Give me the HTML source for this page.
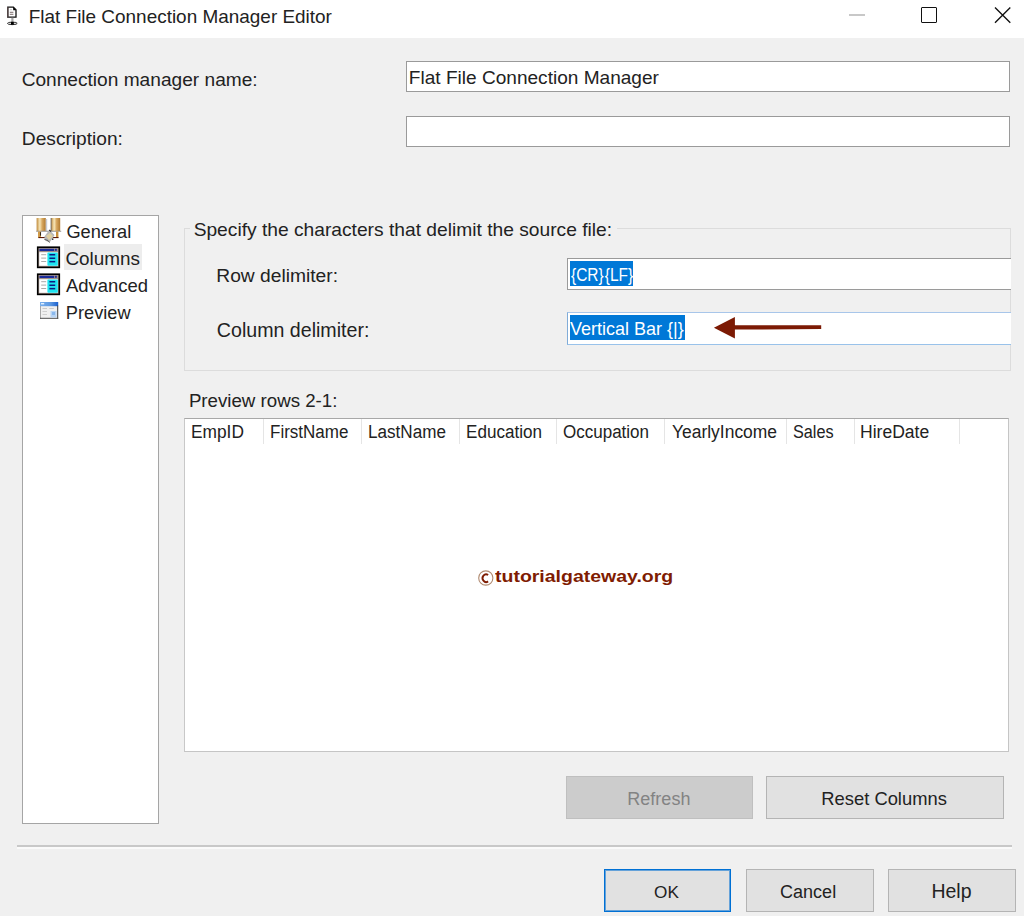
<!DOCTYPE html>
<html><head><meta charset="utf-8">
<style>
html,body{margin:0;padding:0;}
body{width:1024px;height:916px;position:relative;overflow:hidden;background:#f0f0f0;font-family:"Liberation Sans",sans-serif;color:#000;}
.a{position:absolute;}
.t{position:absolute;line-height:1;white-space:nowrap;color:#222;}
.tb{position:absolute;background:#fff;border:1px solid #9a9a9a;box-sizing:border-box;}
.btn{position:absolute;box-sizing:border-box;background:#e1e1e1;border:1px solid #b4b4b4;}
.hd{position:absolute;top:419px;width:1px;height:25px;background:#e5e5e5;}
</style></head>
<body>
<div class="a" style="left:0;top:0;width:1024px;height:38px;background:#fff;"></div>
<svg class="a" style="left:0;top:0" width="30" height="30" viewBox="0 0 30 30">
  <path d="M7.8 7.2 H13.4 L16 9.8 V17.1 H7.8 Z" fill="#fff" stroke="#111" stroke-width="1.3"/>
  <path d="M13.2 7.2 L16.2 10.2 H13.2Z" fill="#000"/>
  <rect x="7.2" y="7" width="1.2" height="10.6" fill="#5a4a4a"/>
  <rect x="9.8" y="9.3" width="2.2" height="0.9" fill="#bbb"/>
  <rect x="9.8" y="11.8" width="3.6" height="0.9" fill="#6b5b5b"/>
  <rect x="9.8" y="13.8" width="3.6" height="0.9" fill="#6b5b5b"/>
  <rect x="11.3" y="17.8" width="2.2" height="4.2" fill="#a8a8a8"/>
  <ellipse cx="12.3" cy="23.4" rx="4.9" ry="1.25" fill="#e0e0e0" stroke="#3a3a3a" stroke-width="1"/>
  <rect x="11" y="21.9" width="2.8" height="2.9" fill="#000"/>
</svg>
<div class="t" style="left:28.78px;top:7.61px;font-size:18.96px;">Flat File Connection Manager Editor</div>
<div class="a" style="left:849px;top:14px;width:16px;height:1.5px;background:#c8c8c8;"></div>
<div class="a" style="left:921px;top:7.2px;width:15.8px;height:15.8px;box-sizing:border-box;border:1.4px solid #111;border-radius:1px;"></div>
<svg class="a" style="left:990px;top:3px" width="24" height="24" viewBox="0 0 24 24">
  <path d="M5 4.5 L20.3 19.8 M20.3 4.5 L5 19.8" stroke="#111" stroke-width="1.35"/>
</svg>
<div class="t" style="left:21.64px;top:70.30px;font-size:19.14px;">Connection manager name:</div>
<div class="tb" style="left:406px;top:61px;width:604px;height:31px;"></div>
<div class="t" style="left:408.87px;top:67.51px;font-size:19.07px;">Flat File Connection Manager</div>
<div class="t" style="left:21.87px;top:129.01px;font-size:19.15px;">Description:</div>
<div class="tb" style="left:406px;top:116px;width:604px;height:31px;"></div>
<div class="tb" style="left:22px;top:215px;width:137px;height:609px;border-color:#a5a5a5;"></div>
<div class="a" style="left:64px;top:244px;width:78px;height:26px;background:#ededed;"></div>
<div class="t" style="left:66.39px;top:222.70px;font-size:18.26px;">General</div>
<div class="t" style="left:65.46px;top:250.21px;font-size:18.90px;">Columns</div>
<div class="t" style="left:66.00px;top:276.81px;font-size:18.44px;">Advanced</div>
<div class="t" style="left:65.84px;top:303.81px;font-size:18.22px;">Preview</div>
<svg class="a" style="left:34px;top:215px" width="30" height="30" viewBox="0 0 30 30">
  <defs><linearGradient id="gold" x1="0" x2="1"><stop offset="0" stop-color="#c08a3a"/><stop offset="0.35" stop-color="#f6e6b8"/><stop offset="0.6" stop-color="#d8a860"/><stop offset="1" stop-color="#b07a30"/></linearGradient></defs>
  <rect x="2.6" y="3" width="9.2" height="13" fill="url(#gold)"/>
  <rect x="17" y="3" width="9.2" height="13" fill="url(#gold)"/>
  <rect x="11.8" y="4" width="1.4" height="12" fill="#c8ccd4"/>
  <rect x="16.6" y="3" width="0.9" height="13" fill="#707070"/>
  <rect x="2.2" y="15.8" width="25" height="0.9" fill="#8a8a8a"/>
  <rect x="4" y="16.5" width="3" height="6.5" fill="#d09a48"/>
  <rect x="22" y="16.5" width="2.4" height="6.5" fill="#c8903a"/>
  <rect x="6.2" y="17.2" width="1" height="3.5" fill="#111"/>
  <rect x="7.2" y="17.2" width="14.8" height="4" fill="#fff"/>
  <rect x="4.5" y="22" width="20" height="1.1" fill="#5a1a08"/>
  <path d="M10.5 21.5 L15.2 15 L17 16.5 L20.5 20 L18.5 23.5 L15.5 27.5 L13 26.5 L10.5 24.5Z" fill="#b8b8b8"/>
  <path d="M12 21 L16 18 L19 21 L15 25Z" fill="#e0d0a0"/>
  <path d="M10.5 24.5 L14 25.5 L15.5 27.5" fill="none" stroke="#555" stroke-width="1"/>
  <path d="M15.2 15 L17 16.5" fill="none" stroke="#333" stroke-width="1.2"/>
  <rect x="18" y="23.6" width="1.4" height="1.2" fill="#111"/>
</svg>
<svg class="a" style="left:34px;top:243px" width="30" height="30" viewBox="0 0 30 30">
  <rect x="3.7" y="4.2" width="21.6" height="20.2" fill="#a09088" stroke="#000" stroke-width="1.6"/>
  <rect x="5.2" y="9.2" width="18.6" height="13.6" fill="#fff"/>
  <rect x="5.5" y="5.8" width="14.5" height="2.2" fill="#1a2a9a"/>
  <rect x="20.8" y="5.8" width="2" height="2" fill="#1a2a9a"/>
  <rect x="13.4" y="9.4" width="10.4" height="13.4" rx="1" fill="#1ee4f0"/>
  <rect x="15.4" y="11" width="5.8" height="1.5" fill="#0a1a80"/>
  <rect x="15.4" y="14.5" width="5.8" height="1.5" fill="#0a1a80"/>
  <rect x="15.4" y="17.9" width="5.8" height="1.5" fill="#0a1a80"/>
  <rect x="7.2" y="11.2" width="5" height="1" fill="#aaa"/>
  <rect x="7.2" y="14.6" width="5" height="1" fill="#aaa"/>
  <rect x="7.2" y="18" width="5" height="1" fill="#aaa"/>
</svg>
<svg class="a" style="left:34px;top:270px" width="30" height="30" viewBox="0 0 30 30">
  <rect x="3.7" y="4.2" width="21.6" height="20.2" fill="#a09088" stroke="#000" stroke-width="1.6"/>
  <rect x="5.2" y="9.2" width="18.6" height="13.6" fill="#fff"/>
  <rect x="5.5" y="5.8" width="14.5" height="2.2" fill="#1a2a9a"/>
  <rect x="20.8" y="5.8" width="2" height="2" fill="#1a2a9a"/>
  <rect x="13.4" y="9.4" width="10.4" height="13.4" rx="1" fill="#1ee4f0"/>
  <rect x="15.4" y="11" width="5.8" height="1.5" fill="#0a1a80"/>
  <rect x="15.4" y="14.5" width="5.8" height="1.5" fill="#0a1a80"/>
  <rect x="15.4" y="17.9" width="5.8" height="1.5" fill="#0a1a80"/>
  <rect x="7.2" y="11.2" width="5" height="1" fill="#aaa"/>
  <rect x="7.2" y="14.6" width="5" height="1" fill="#aaa"/>
  <rect x="7.2" y="18" width="5" height="1" fill="#aaa"/>
</svg>
<svg class="a" style="left:34px;top:297px" width="30" height="30" viewBox="0 0 30 30">
  <defs><linearGradient id="pvb" x1="0" x2="1"><stop offset="0" stop-color="#7ab0ee"/><stop offset="0.6" stop-color="#5a96e0"/><stop offset="1" stop-color="#1a60d0"/></linearGradient></defs>
  <rect x="6" y="5" width="18.2" height="16.8" fill="#f0f0f0"/>
  <rect x="6" y="5" width="18.2" height="4.2" fill="url(#pvb)"/>
  <rect x="7" y="6" width="3.2" height="1.4" fill="#e0f0ff"/>
  <rect x="6" y="9" width="0.9" height="12.8" fill="#a0a0a0"/>
  <rect x="23.2" y="8.5" width="1" height="13.3" fill="#404040"/>
  <rect x="6" y="20.8" width="18.2" height="1" fill="#505050"/>
  <rect x="8.5" y="11.2" width="4.5" height="0.7" fill="#b8b8b8"/>
  <rect x="15.3" y="11.2" width="4.5" height="0.7" fill="#b8b8b8"/>
  <rect x="8.5" y="14.2" width="4.5" height="0.7" fill="#c0c0c0"/>
  <rect x="8.5" y="17.2" width="4.5" height="0.7" fill="#c0c0c0"/>
  <rect x="16.5" y="14" width="6" height="6.5" fill="#b8d4f4"/>
  <rect x="18" y="15" width="3" height="3" fill="#8ab8ec"/>
</svg>
<div class="a" style="left:184px;top:228px;width:827px;height:143px;box-sizing:border-box;border:1px solid #dcdcdc;"></div>
<div class="a" style="left:190px;top:220px;width:427px;height:20px;background:#f0f0f0;"></div>
<div class="t" style="left:193.63px;top:219.70px;font-size:19.22px;">Specify the characters that delimit the source file:</div>
<div class="t" style="left:216.26px;top:266.40px;font-size:19.23px;">Row delimiter:</div>
<div class="t" style="left:216.82px;top:321.41px;font-size:19.63px;">Column delimiter:</div>
<div class="tb" style="left:567px;top:258px;width:444px;height:32px;border-right:none;"></div>
<div class="a" style="left:570px;top:261px;width:63px;height:25px;background:#0078d7;"></div>
<div class="t" style="left:571.05px;top:266.82px;font-size:17.50px;color:#fff;transform:scaleX(0.8850);transform-origin:0 0;">{CR}<span style="margin-left:1.2px">{</span>LF}</div>
<div class="tb" style="left:567px;top:312px;width:444px;height:33px;border-color:#a8c6ea #99c2ea #99c2ea #80acd8;border-right:none;"></div>
<div class="a" style="left:570px;top:315px;width:115px;height:25px;background:#0078d7;"></div>
<div class="t" style="left:569.70px;top:318.91px;font-size:19.00px;color:#fff;transform:scaleX(0.9480);transform-origin:0 0;">Vertical Bar {|}</div>
<svg class="a" style="left:700px;top:310px" width="130" height="36" viewBox="0 0 130 36">
  <path d="M13.9 17.8 L34.9 7 L34.9 15.3 L121.2 15.2 L121.2 19.1 L34.9 19.6 L34.9 28.6 Z" fill="#7c1a04"/>
</svg>
<div class="t" style="left:188.90px;top:392.00px;font-size:18.69px;">Preview rows 2-1:</div>
<div class="tb" style="left:184px;top:418px;width:825px;height:334px;border-color:#a8a8a8 #c5c5c5 #c5c5c5 #c8c8c8;"></div>
<div class="hd" style="left:263px;"></div>
<div class="hd" style="left:361px;"></div>
<div class="hd" style="left:459px;"></div>
<div class="hd" style="left:556px;"></div>
<div class="hd" style="left:664px;"></div>
<div class="hd" style="left:786px;"></div>
<div class="hd" style="left:854px;"></div>
<div class="hd" style="left:959px;"></div>
<div class="t" style="left:191.01px;top:423.20px;font-size:18.00px;transform:scaleX(0.9619);transform-origin:0 0;">EmpID</div>
<div class="t" style="left:269.54px;top:423.20px;font-size:18.00px;transform:scaleX(0.9442);transform-origin:0 0;">FirstName</div>
<div class="t" style="left:367.53px;top:423.20px;font-size:18.00px;transform:scaleX(0.9494);transform-origin:0 0;">LastName</div>
<div class="t" style="left:466.03px;top:423.20px;font-size:18.00px;transform:scaleX(0.9496);transform-origin:0 0;">Education</div>
<div class="t" style="left:562.92px;top:423.20px;font-size:18.00px;transform:scaleX(0.9449);transform-origin:0 0;">Occupation</div>
<div class="t" style="left:671.70px;top:423.20px;font-size:18.00px;transform:scaleX(0.9689);transform-origin:0 0;">YearlyIncome</div>
<div class="t" style="left:793.15px;top:423.20px;font-size:18.00px;transform:scaleX(0.9025);transform-origin:0 0;">Sales</div>
<div class="t" style="left:860.00px;top:423.20px;font-size:18.00px;transform:scaleX(0.9749);transform-origin:0 0;">HireDate</div>
<svg class="a" style="left:474px;top:566px" width="24" height="24" viewBox="474 566 24 24">
  <circle cx="485.8" cy="578" r="7.1" fill="none" stroke="#b08a70" stroke-width="1.1"/>
  <path d="M488.1 575.0 A3.6 3.8 0 1 0 488.1 581.4" fill="none" stroke="#7f1c02" stroke-width="1.9"/>
</svg>
<div class="t" style="left:495.31px;top:568.01px;font-size:17.00px;color:#7f1c02;font-weight:bold;transform:scaleX(1.1460);transform-origin:0 0;">tutorialgateway.org</div>
<div class="btn" style="left:566px;top:776px;width:187px;height:43px;background:#cccccc;border-color:#bfbfbf;"></div>
<div class="t" style="left:627.36px;top:789.91px;font-size:18.00px;color:#838383;">Refresh</div>
<div class="btn" style="left:766px;top:776px;width:238px;height:43px;"></div>
<div class="t" style="left:821.33px;top:789.71px;font-size:18.38px;">Reset Columns</div>
<div class="a" style="left:17px;top:845px;width:995px;height:2px;background:#c8c8c8;"></div>
<div class="a" style="left:17px;top:847px;width:995px;height:2px;background:#fafafa;"></div>
<div class="btn" style="left:604px;top:869px;width:127px;height:43px;border:1px solid #0070d4;box-shadow:inset 0 0 0 1px rgba(0,112,212,0.55);"></div>
<div class="t" style="left:654.11px;top:884.01px;font-size:17.17px;">OK</div>
<div class="btn" style="left:746px;top:869px;width:128px;height:43px;"></div>
<div class="t" style="left:780.10px;top:883.30px;font-size:18.00px;">Cancel</div>
<div class="btn" style="left:888px;top:869px;width:128px;height:43px;"></div>
<div class="t" style="left:931.44px;top:882.10px;font-size:19.48px;">Help</div>
</body></html>
